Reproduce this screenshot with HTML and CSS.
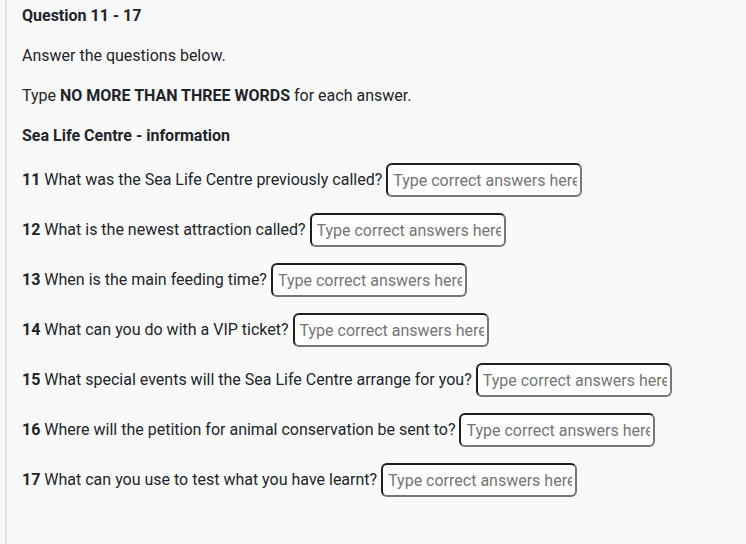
FILE: index.html
```html
<!DOCTYPE html>
<html>
<head>
<meta charset="utf-8">
<link rel="stylesheet" href="styles.css">
</head>
<body>
<div class="panel">
  <h3 class="title">Question 11 - 17</h3>
  <p class="line">Answer the questions below.</p>
  <p class="line">Type <b>NO MORE THAN THREE WORDS</b> for each answer.</p>
  <p class="line"><b>Sea Life Centre - information</b></p>
  <div class="questions">
    <div class="q"><span class="qt"><b>11</b> What was the Sea Life Centre previously called?</span><input class="ans" type="text" placeholder="Type correct answers here"></div>
    <div class="q"><span class="qt"><b>12</b> What is the newest attraction called?</span><input class="ans" type="text" placeholder="Type correct answers here"></div>
    <div class="q"><span class="qt"><b>13</b> When is the main feeding time?</span><input class="ans" type="text" placeholder="Type correct answers here"></div>
    <div class="q"><span class="qt"><b>14</b> What can you do with a VIP ticket?</span><input class="ans" type="text" placeholder="Type correct answers here"></div>
    <div class="q"><span class="qt"><b>15</b> What special events will the Sea Life Centre arrange for you?</span><input class="ans" type="text" placeholder="Type correct answers here"></div>
    <div class="q"><span class="qt"><b>16</b> Where will the petition for animal conservation be sent to?</span><input class="ans" type="text" placeholder="Type correct answers here"></div>
    <div class="q"><span class="qt"><b>17</b> What can you use to test what you have learnt?</span><input class="ans" type="text" placeholder="Type correct answers here"></div>
  </div>
</div>
</body>
</html>
```

FILE: styles.css
```css
html, body {
  margin: 0;
  padding: 0;
  background: #f9f9f9;
}
body {
  font-family: Roboto, "Liberation Sans", sans-serif;
  font-size: 16px;
  color: #212529;
  height: 544px;
  overflow: hidden;
}
.panel {
  margin-left: 5px;
  border-left: 2px solid #dfe2e6;
  padding: 6px 15px 0 15px;
  min-height: 544px;
  box-sizing: border-box;
}
.title {
  margin: 0;
  font-size: 16px;
  font-weight: 700;
  line-height: 20px;
}
.line {
  margin: 20px 0 0 0;
  line-height: 20px;
}
.line b, .q b {
  font-weight: 700;
}
.questions {
  margin-top: 17px;
  display: flex;
  flex-direction: column;
  gap: 16px;
}
.q {
  display: flex;
  align-items: center;
  gap: 4px;
  height: 34px;
}
.qt {
  line-height: 20px;
}
.ans {
  width: 196px;
  height: 34px;
  box-sizing: border-box;
  border: 2px solid;
  border-color: #202020 #777777 #777777 #202020;
  border-radius: 6px;
  background: #ffffff;
  padding: 0 3px 0 5px;
  font-family: Roboto, "Liberation Sans", sans-serif;
  font-size: 16px;
  color: #212529;
  outline: none;
}
.ans::placeholder {
  color: #757575;
  opacity: 1;
}
```
